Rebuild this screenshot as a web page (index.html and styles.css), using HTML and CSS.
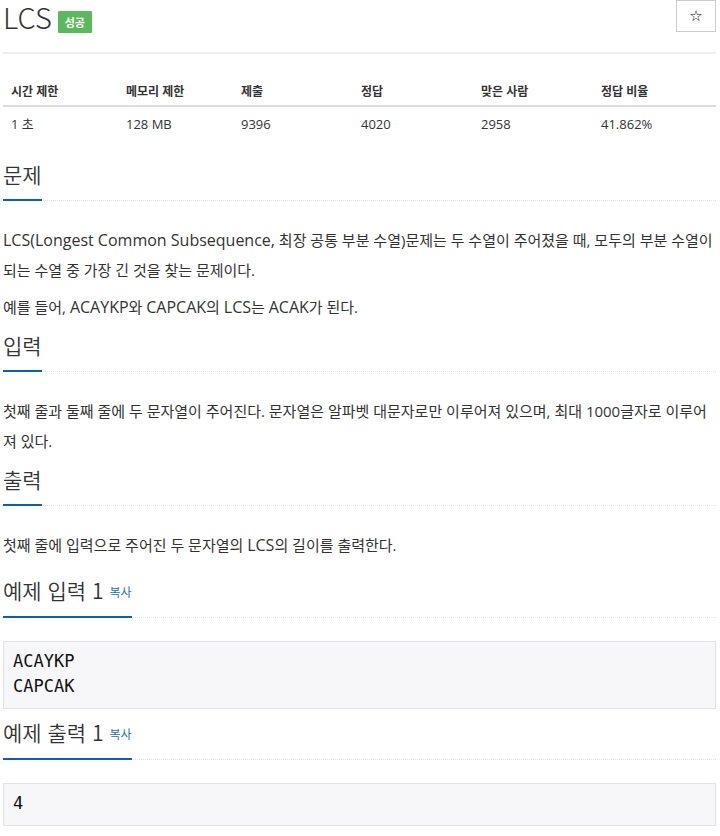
FILE: index.html
```html
<!DOCTYPE html>
<html lang="ko">
<head>
  <meta charset="UTF-8" />
  <meta name="viewport" content="width=device-width, initial-scale=1.0"/>
  <title>LCS</title>
  <link rel="stylesheet" href="styles.css">
</head>
<body>
  <div class="page">
    <div class="page-header">
      <h1 class="title">LCS <span class="badge">성공</span></h1>
      <button class="star-btn" type="button">☆</button>
    </div>

    <table class="info">
      <thead>
        <tr>
          <th class="c1">시간 제한</th>
          <th class="c2">메모리 제한</th>
          <th class="c3">제출</th>
          <th class="c4">정답</th>
          <th class="c5">맞은 사람</th>
          <th>정답 비율</th>
        </tr>
      </thead>
      <tbody>
        <tr>
          <td>1 초</td>
          <td>128 MB</td>
          <td>9396</td>
          <td>4020</td>
          <td>2958</td>
          <td>41.862%</td>
        </tr>
      </tbody>
    </table>

    <section class="section first">
      <div class="headline"><h2>문제</h2></div>
      <p><span class="en">LCS(Longest Common Subsequence,</span> 최장 공통 부분 수열)문제는 두 수열이 주어졌을 때, 모두의 부분 수열이 되는 수열 중 가장 긴 것을 찾는 문제이다.</p>
      <p>예를 들어, <span class="en">ACAYKP</span>와 <span class="en">CAPCAK</span>의 <span class="en">LCS</span>는 <span class="en">ACAK</span>가 된다.</p>
    </section>

    <section class="section">
      <div class="headline"><h2>입력</h2></div>
      <p>첫째 줄과 둘째 줄에 두 문자열이 주어진다. 문자열은 알파벳 대문자로만 이루어져 있으며, 최대 1000글자로 이루어져 있다.</p>
    </section>

    <section class="section">
      <div class="headline"><h2>출력</h2></div>
      <p>첫째 줄에 입력으로 주어진 두 문자열의 <span class="en">LCS</span>의 길이를 출력한다.</p>
    </section>

    <section class="section sample first-sample">
      <div class="headline"><h2>예제 입력 1 <a class="copy" href="#">복사</a></h2></div>
      <pre class="sample-data">ACAYKP
CAPCAK</pre>
    </section>

    <section class="section sample">
      <div class="headline"><h2>예제 출력 1 <a class="copy" href="#">복사</a></h2></div>
      <pre class="sample-data">4</pre>
    </section>
  </div>
</body>
</html>
```

FILE: styles.css
```css
body {
  margin: 0;
  font-family: "Open Sans", "Noto Sans CJK KR", sans-serif;
  color: #333;
  background: #fff;
}
.page {
  padding: 0 4px 0 3px;
}
.page-header {
  display: flex;
  justify-content: space-between;
  align-items: flex-start;
  height: 52px;
  border-bottom: 2px solid #eee;
}
.title {
  margin: 0;
  display: flex;
  align-items: flex-start;
  font-family: "Noto Sans CJK KR", sans-serif;
  font-size: 29px;
  font-weight: 300;
  line-height: 32px;
}
.badge {
  display: inline-block;
  margin-left: 6px;
  margin-top: 11px;
  padding: 0 7px;
  height: 22px;
  line-height: 22px;
  font-size: 11px;
  font-weight: bold;
  color: #fff;
  background: #5cb85c;
  border-radius: 1px;
}
.star-btn {
  width: 40px;
  height: 32px;
  padding: 0;
  background: #fff;
  border: 1px solid #ccc;
  font-size: 15px;
  color: #000;
  font-family: "DejaVu Sans", sans-serif;
}
.info {
  width: 100%;
  margin-top: 21px;
  border-collapse: collapse;
  font-size: 13px;
  line-height: 18px;
  text-align: left;
}
.info th {
  padding: 8px 8px 4px;
  font-size: 12px;
  font-weight: bold;
  border-bottom: 2px solid #ddd;
}
.info td {
  padding: 8px;
}
.info .c1, .info .c2 { width: 99px; }
.info .c3, .info .c4, .info .c5 { width: 104px; }
.section {
  margin-top: 11px;
}
.section.first {
  margin-top: 21px;
}
.section.first-sample {
  margin-top: 18px;
}
.headline {
  border-bottom: 1px dotted #dde2ea;
  margin-bottom: 24px;
}
.headline h2 {
  display: inline-block;
  margin: 0 0 -1px;
  padding-bottom: 12px;
  font-family: "Noto Sans CJK KR", sans-serif;
  font-size: 21px;
  font-weight: 350;
  line-height: 25px;
  border-bottom: 2px solid #0f5ea8;
}
.sample .headline {
  margin-bottom: 23px;
}
.copy {
  font-size: 12px;
  font-weight: normal;
  color: #2a6fb3;
  text-decoration: none;
  vertical-align: 2px;
}
.section p {
  margin: 0 0 7px;
  font-size: 15px;
  line-height: 30px;
}
.section p .en {
  font-size: 16px;
}
.sample-data {
  margin: 0;
  padding: 7px 9px 9px;
  background: #f7f7f9;
  border: 1px solid #e1e1e8;
  font-family: "DejaVu Sans Mono", monospace;
  font-size: 17px;
  line-height: 25px;
  color: #111;
}
```
